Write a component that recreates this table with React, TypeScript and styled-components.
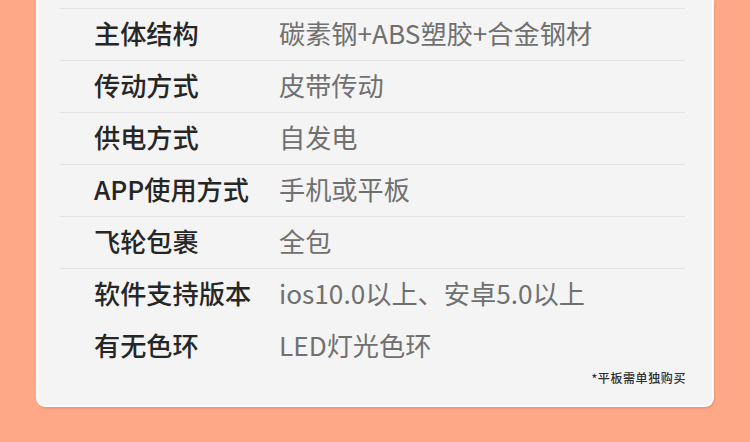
import { FC } from "react";
import styled, { createGlobalStyle } from "styled-components";

const GlobalStyle = createGlobalStyle`
  html, body {
    margin: 0;
    padding: 0;
    background: #ffa888;
  }
  body {
    font-family: "Noto Sans CJK SC", "Noto Sans", sans-serif;
  }
`;

const Page = styled.div`
  width: 750px;
  height: 442px;
  overflow: hidden;
  background: #ffa888;
  box-sizing: border-box;
  padding: 0 36px;
`;

const Card = styled.div`
  box-sizing: border-box;
  width: 678px;
  padding: 8px 26px 19px 22px;
  background-color: #f4f4f4;
  border: 2px solid #fbfbfb;
  border-top: none;
  border-radius: 0 0 9px 9px;
  box-shadow: 1px 2px 2px rgba(190, 100, 70, 0.25);
  display: flex;
  flex-direction: column;
`;

const Rows = styled.div`
  width: 625px;
  display: flex;
  flex-direction: column;
`;

const Row = styled.div<{ $line: boolean }>`
  height: 52px;
  box-sizing: border-box;
  display: grid;
  grid-template-columns: 185px 1fr;
  align-items: center;
  padding-left: 34px;
  border-top: 1px solid ${(p) => (p.$line ? "#e3e3e3" : "transparent")};
  font-size: 26.2px;
  line-height: 1;
  padding-bottom: 2px;
`;

const Label = styled.span`
  color: #262626;
  font-weight: 500;
`;

const Value = styled.span`
  color: #707070;
  font-weight: 400;
`;

const Note = styled.div`
  align-self: flex-end;
  margin-top: -2px;
  font-size: 12px;
  line-height: 16px;
  letter-spacing: 0.6px;
  color: #2e2e2e;
  font-weight: 500;
`;

const specs: [string, string][] = [
  ["主体结构", "碳素钢+ABS塑胶+合金钢材"],
  ["传动方式", "皮带传动"],
  ["供电方式", "自发电"],
  ["APP使用方式", "手机或平板"],
  ["飞轮包裹", "全包"],
  ["软件支持版本", "ios10.0以上、安卓5.0以上"],
  ["有无色环", "LED灯光色环"],
];

const App: FC = () => {
  return (
    <>
      <GlobalStyle />
      <Page>
        <Card>
          <Rows>
            {specs.map(([label, value], i) => (
              <Row key={label} $line={i < 6}>
                <Label>{label}</Label>
                <Value>{value}</Value>
              </Row>
            ))}
          </Rows>
          <Note>*平板需单独购买</Note>
        </Card>
      </Page>
    </>
  );
};

export default App;
